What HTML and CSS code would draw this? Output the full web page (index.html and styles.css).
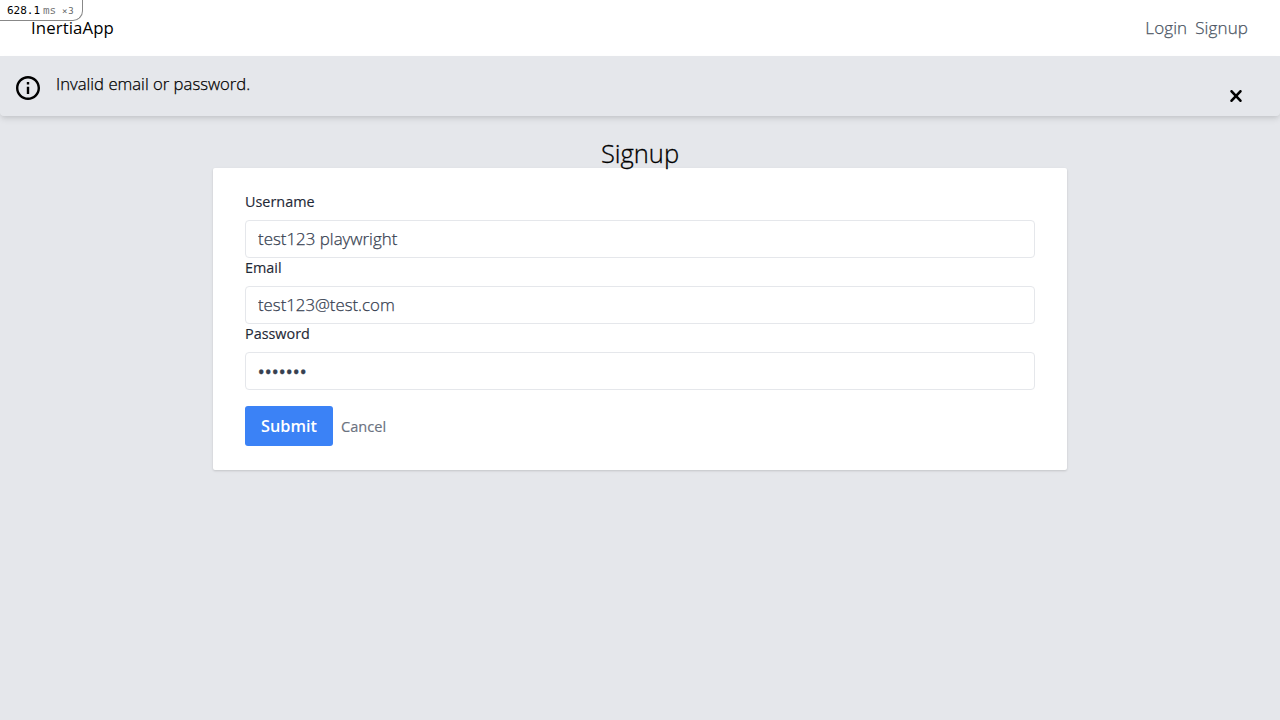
FILE: index.html
```html
<!DOCTYPE html>
<html lang="en">
<head>
<meta charset="utf-8">
<title>InertiaApp</title>
<link rel="stylesheet" href="styles.css">
</head>
<body>
<div class="profiler"><span class="time">628.1</span><span class="unit">ms</span><span class="count">×3</span></div>
<nav class="navbar">
  <a class="brand">InertiaApp</a>
  <div class="links"><a class="login">Login</a><a class="signup">Signup</a></div>
</nav>
<div class="alert">
  <svg class="info" viewBox="2 2 20 20"><path d="M11 7h2v2h-2zm0 4h2v6h-2zm1-9C6.48 2 2 6.48 2 12s4.48 10 10 10 10-4.480 10-10S17.520 2 12 2zm0 18c-4.410 0-8-3.590-8-8s3.590-8 8-8 8 3.590 8 8-3.590 8-8 8z"/></svg>
  <p class="message">Invalid email or password.</p>
  <svg class="close" viewBox="0 0 12 12"><path d="M1.600 1.300 10.400 10.700M10.400 1.300 1.600 10.700"/></svg>
</div>
<main class="container">
  <h1 class="title">Signup</h1>
  <form class="card">
    <label class="label username" for="username">Username</label>
    <input class="input name" id="username" value="test123 playwright">
    <label class="label email" for="email">Email</label>
    <input class="input mail" id="email" value="test123@test.com">
    <label class="label password" for="password">Password</label>
    <input class="input secret" id="password" value="•••••••">
    <div class="actions"><button class="submit" type="button">Submit</button><a class="cancel">Cancel</a></div>
  </form>
</main>
</body>
</html>
```
FILE: styles.css
```css
*, *::before, *::after { box-sizing: border-box; }
body { margin: 0; min-height: 100vh; background: #e5e7eb; color: #000; font: 400 16px/24px "Open Sans", "Noto Sans", sans-serif; }
.profiler { position: absolute; top: 0; left: 0; width: 83px; height: 21px; display: flex; align-items: center; padding: 1px 0 0 7px; background: #fff; border: solid #888; border-width: 0 1px 1px 0; border-radius: 0 0 10px 0; font: 11px/20px "DejaVu Sans Mono", monospace; }
.time { width: 36px; }
.unit { width: 19px; color: #777; }
.count { color: #666; font-size: 9px; letter-spacing: .8px; }
.navbar { height: 56px; padding: 0 32px; display: flex; align-items: center; justify-content: space-between; background: #fff; }
.brand { margin-left: -1px; font-size: 16.800px; letter-spacing: .1px; }
.links { display: flex; gap: 8px; color: #4b5563; font-size: 17px; font-weight: 300; -webkit-text-stroke: .25px; }
.login, .signup { letter-spacing: .1px; }
.alert { height: 60px; padding: 16px; display: flex; border-radius: 0 0 4px 4px; box-shadow: 0 4px 6px -1px rgba(0,0,0,.1), 0 2px 4px -1px rgba(0,0,0,.06); }
.info { width: 24px; height: 24px; margin: 4px 16px 0 0; }
.message { margin: 0; font-size: 16.700px; font-weight: 300; -webkit-text-stroke: .25px; }
.close { width: 12px; height: 12px; margin: 18px 22px 0 auto; stroke: #000; stroke-width: 2.600; stroke-linecap: round; }
.container { width: 854px; margin: 0 auto; padding-top: 20px; }
.title { margin: 0; height: 32px; text-align: center; font-size: 25.500px; line-height: 34px; font-weight: 300; -webkit-text-stroke: .3px; }
.card { height: 302px; padding: 24px 32px; border-radius: 2px; background: #fff; box-shadow: 0 1px 3px rgba(0,0,0,.1), 0 1px 2px rgba(0,0,0,.06); }
.label { display: block; width: max-content; height: 28px; color: #1f2937; font-size: 14.400px; line-height: 20px; -webkit-text-stroke: .15px; }
.input { display: block; width: 100%; height: 38px; padding: 0 12px 2px; border: 1px solid #e5e7eb; border-radius: 4px; background: #fff; color: #374151; font: 300 16.900px/24px "Open Sans", "Noto Sans", sans-serif; -webkit-text-stroke: .25px; }
.mail { font-size: 16.800px; }
.secret { padding-top: 1px; padding-bottom: 1px; font-size: 17px; font-weight: 600; letter-spacing: .6px; }
.actions { display: flex; align-items: center; gap: 8px; margin-top: 16px; }
.submit { width: 88px; height: 40px; padding: 0; border: 0; border-radius: 3px; background: #3b82f6; color: #fff; font: 600 16.300px/24px "Open Sans", "Noto Sans", sans-serif; }
.cancel { color: #6b7280; font-size: 14.600px; line-height: 20px; -webkit-text-stroke: .15px; }
```
